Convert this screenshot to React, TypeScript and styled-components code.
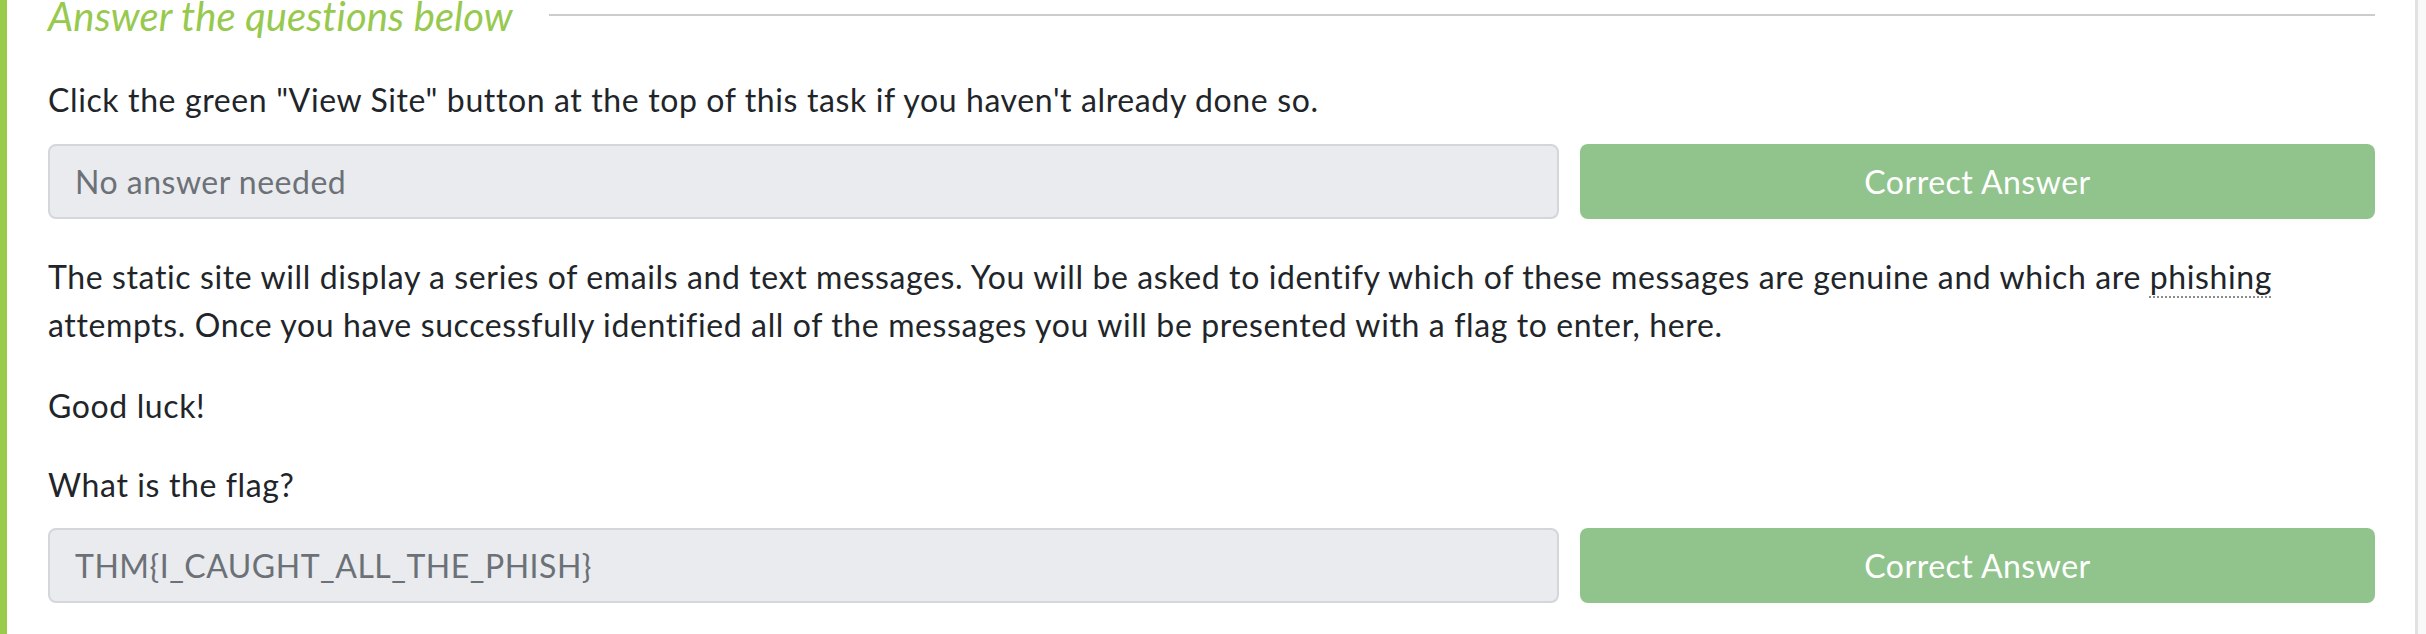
import React from "react";
import styled, { createGlobalStyle } from "styled-components";

const GlobalStyle = createGlobalStyle`
  html, body {
    margin: 0;
    padding: 0;
    background: #f8f8f8;
  }
  body {
    font-family: Lato, "Noto Sans", sans-serif;
    color: #212529;
  }
  * { box-sizing: border-box; }
`;

const Page = styled.div`
  display: flex;
  width: 2426px;
  height: 634px;
  padding-right: 8px;
  background: #f8f8f8;
  overflow: hidden;
`;

const Card = styled.section`
  flex: 1;
  background: #ffffff;
  border-left: 7px solid #9bcb4b;
  border-right: 3px solid #e1e1e1;
  padding: 0 40px 0 41px;
`;

const HeaderRow = styled.div`
  display: flex;
  align-items: flex-start;
  height: 28px;
  margin-bottom: 48px;
`;

const Heading = styled.h4`
  margin: 0;
  padding-top: 4px;
  font-family: Lato, "Noto Sans", sans-serif;
  font-style: italic;
  font-weight: 400;
  font-size: 40px;
  line-height: 24px;
  letter-spacing: 0.1px;
  color: #97c94f;
  white-space: nowrap;
`;

const Rule = styled.div`
  flex: 1;
  height: 2px;
  margin: 14px 0 0 36px;
  background: #cccccc;
`;

const Text = styled.p<{ $gap?: number }>`
  margin: 0 0 ${(p) => (p.$gap ?? 31)}px;
  font-size: 32px;
  line-height: 48px;
  letter-spacing: 0.62px;
`;

const Abbr = styled.abbr`
  text-decoration: underline dotted #8c8c8c;
  text-decoration-thickness: 2px;
  text-underline-offset: 7px;
  cursor: help;
`;

const AnswerRow = styled.div`
  display: grid;
  grid-template-columns: 1fr 795px;
  gap: 21px;
  margin-bottom: 34px;
`;

const AnswerInput = styled.input`
  height: 75px;
  width: 100%;
  padding: 0 25px;
  border: 2px solid #d3d6da;
  border-radius: 8px;
  background: #e9ebef;
  color: #6c7177;
  font-family: Lato, "Noto Sans", sans-serif;
  font-size: 32px;
  letter-spacing: 0.5px;
  outline: none;
`;

const CorrectButton = styled.button`
  height: 75px;
  border: none;
  border-radius: 8px;
  background: #91c48d;
  color: #ffffff;
  font-family: Lato, "Noto Sans", sans-serif;
  font-size: 32px;
  letter-spacing: 0.5px;
  cursor: default;
`;

const Answer: React.FC<{ value: string }> = ({ value }) => (
  <AnswerRow>
    <AnswerInput readOnly value={value} />
    <CorrectButton type="button">Correct Answer</CorrectButton>
  </AnswerRow>
);

export default function App() {
  return (
    <>
      <GlobalStyle />
      <Page>
        <Card>
          <HeaderRow>
            <Heading>Answer the questions below</Heading>
            <Rule />
          </HeaderRow>
          <Text $gap={20}>
            Click the green "View Site" button at the top of this task if you haven't already done so.
          </Text>
          <Answer value="No answer needed" />
          <Text $gap={33}>
            The static site will display a series of emails and text messages. You will be asked to identify which of
            these messages are genuine and which are <Abbr title="phishing">phishing</Abbr> attempts. Once you have
            successfully identified all of the messages you will be presented with a flag to enter, here.
          </Text>
          <Text>Good luck!</Text>
          <Text $gap={19}>What is the flag?</Text>
          <Answer value="THM{I_CAUGHT_ALL_THE_PHISH}" />
        </Card>
      </Page>
    </>
  );
}
